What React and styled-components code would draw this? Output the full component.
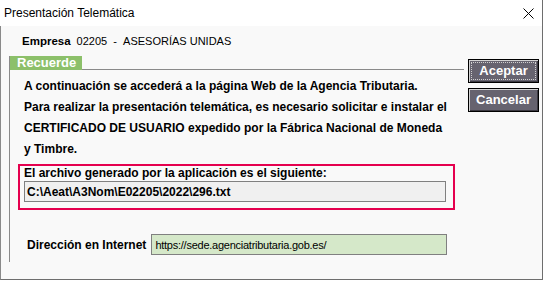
import React from "react";
import styled, { createGlobalStyle } from "styled-components";

const Global = createGlobalStyle`
  html, body { margin: 0; padding: 0; background: #ffffff; }
  body { font-family: "Liberation Sans", Arial, sans-serif; }
`;

const Window = styled.div`
  width: 543px;
  height: 280px;
  box-sizing: border-box;
  display: flex;
  flex-direction: column;
  background: #f9f9f9;
  border-right: 1px solid #6e6e6e;
  border-left: 1px solid #8a8a8a;
  border-bottom: 1px solid #6e6e6e;
`;

const TitleBar = styled.div`
  height: 26px;
  flex: none;
  background: #ffffff;
  display: flex;
  align-items: center;
  justify-content: space-between;
  padding: 0 8px 0 4px;
  margin-left: -1px;
  font-family: "Liberation Sans", Arial, sans-serif;
  font-size: 12px;
  color: #000;
`;

const Close = styled.svg`
  width: 11px;
  height: 11px;
  margin-top: 1px;
`;

const Content = styled.div`
  flex: 1;
  display: flex;
  flex-direction: column;
  padding: 8px 0 0 8px;
`;

const Empresa = styled.div`
  display: flex;
  align-items: center;
  gap: 6px;
  padding-left: 13px;
  height: 14px;
  font-size: 11px;
  color: #000;
`;

const Bold = styled.span`
  font-weight: bold;
  font-size: 11.5px;
`;

const Main = styled.div`
  display: flex;
  margin-top: 8px;
  gap: 4px;
`;

const Group = styled.div`
  width: 455px;
  display: flex;
  flex-direction: column;
`;

const GroupHead = styled.div`
  display: flex;
  height: 14px;
`;

const Tab = styled.div`
  width: 73px;
  box-sizing: border-box;
  background: #8cc06a;
  border-left: 1px solid #8a8a8a;
  color: #fff;
  font-weight: bold;
  font-size: 13px;
  line-height: 14px;
  padding-left: 7px;
`;

const HeadLine = styled.div`
  flex: 1;
  border-bottom: 1px solid #8a8a8a;
`;

const GroupBody = styled.div`
  border-left: 1px solid #8a8a8a;
  height: 192px;
  padding: 6px 0 0 14px;
  box-sizing: border-box;
  display: flex;
  flex-direction: column;
`;

const Line = styled.div`
  font-size: 12px;
  font-weight: bold;
  line-height: 21px;
  height: 21px;
  color: #000;
  white-space: nowrap;
`;

const RedBox = styled.div`
  margin: 4px 0 0 -6px;
  width: 437px;
  box-sizing: border-box;
  border: 2px solid #e5004e;
  padding: 0 7px 6px 4px;
  display: flex;
  flex-direction: column;
`;

const Label = styled.div`
  font-size: 12px;
  font-weight: bold;
  line-height: 15px;
  height: 15px;
  color: #000;
`;

const Field = styled.div`
  height: 21px;
  box-sizing: border-box;
  border: 1px solid #808080;
  background: ${(p) => p.$bg};
  display: flex;
  align-items: center;
  padding-left: ${(p) => (p.$bold ? 2 : 3)}px;
  font-size: ${(p) => (p.$bold ? 12 : 11)}px;
  font-weight: ${(p) => (p.$bold ? "bold" : "normal")};
  letter-spacing: ${(p) => (p.$bold ? 0 : -0.25)}px;
  font-family: "Liberation Sans", Arial, sans-serif;
  color: #000;
  white-space: nowrap;
`;

const InetRow = styled.div`
  display: flex;
  align-items: center;
  gap: 5px;
  margin: 24px 0 0 3px;
`;

const InetLabel = styled(Label)`
  line-height: 20px;
  height: 20px;
`;

const Buttons = styled.div`
  display: flex;
  flex-direction: column;
  gap: 5px;
  margin-top: 3px;
`;

const Button = styled.button`
  position: relative;
  width: 71px;
  height: 24px;
  box-sizing: border-box;
  border: 1px solid #000;
  background: #66636f;
  box-shadow: inset 1px 1px 0 #d4d4d4, inset -1px -1px 0 #3c3a42;
  color: #fff;
  font-family: "Liberation Sans", Arial, sans-serif;
  font-weight: bold;
  font-size: 13px;
  padding: 0 0 1px 0;
  cursor: default;
  &::after {
    content: "";
    display: ${(p) => (p.$focus ? "block" : "none")};
    position: absolute;
    inset: 2px;
    border: 1px dotted #d0d0d0;
  }
`;

export default function App() {
  return (
    <>
      <Global />
      <Window>
        <TitleBar>
          <span>Presentación Telemática</span>
          <Close viewBox="0 0 11 11">
            <path d="M0.5 0.5 L10.5 10.5 M10.5 0.5 L0.5 10.5" stroke="#000" strokeWidth="1" fill="none" />
          </Close>
        </TitleBar>
        <Content>
          <Empresa>
            <Bold>Empresa</Bold>
            <span>02205&nbsp; - &nbsp;ASESORÍAS UNIDAS</span>
          </Empresa>
          <Main>
            <Group>
              <GroupHead>
                <Tab>Recuerde</Tab>
                <HeadLine />
              </GroupHead>
              <GroupBody>
                <Line>A continuación se accederá a la página Web de la Agencia Tributaria.</Line>
                <Line>Para realizar la presentación telemática, es necesario solicitar e instalar el</Line>
                <Line>CERTIFICADO DE USUARIO expedido por la Fábrica Nacional de Moneda</Line>
                <Line>y Timbre.</Line>
                <RedBox>
                  <Label>El archivo generado por la aplicación es el siguiente:</Label>
                  <Field $bg="#f0f0f0" $bold>C:\Aeat\A3Nom\E02205\2022\296.txt</Field>
                </RedBox>
                <InetRow>
                  <InetLabel>Dirección en Internet</InetLabel>
                  <Field $bg="#d5e8c9" style={{ width: 296 }}>https://sede.agenciatributaria.gob.es/</Field>
                </InetRow>
              </GroupBody>
            </Group>
            <Buttons>
              <Button $focus>Aceptar</Button>
              <Button>Cancelar</Button>
            </Buttons>
          </Main>
        </Content>
      </Window>
    </>
  );
}
